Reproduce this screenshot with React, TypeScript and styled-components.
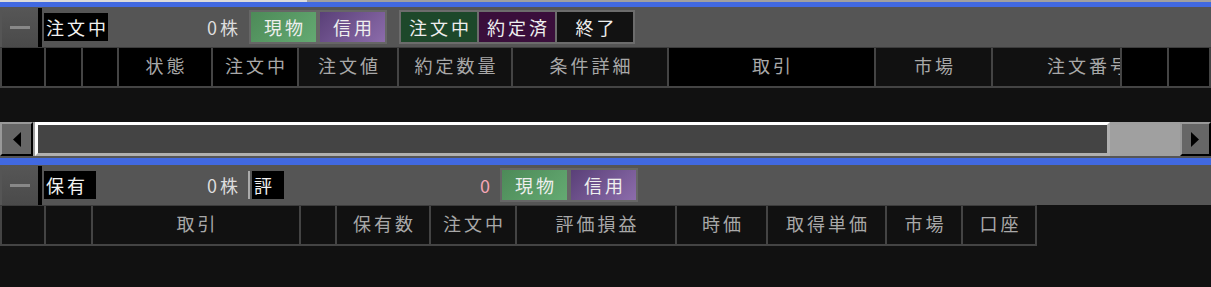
import React from 'react';
import styled, { createGlobalStyle } from 'styled-components';

const GlobalStyle = createGlobalStyle`
	html, body {
		margin: 0;
		padding: 0;
		background: #111;
	}
	body {
		font-family: 'Noto Sans CJK JP', 'DejaVu Sans', sans-serif;
		overflow: hidden;
	}
`;

const Page = styled.div`
	width: 1211px;
	height: 287px;
	display: flex;
	flex-direction: column;
	background: #111;
`;

const TopStrip = styled.div`
	height: 2px;
	background: linear-gradient(to right, #dcdcdc 0, #dcdcdc 307px, #a0a0a0 307px);
`;

const BlueBar = styled.div<{ $h: number }>`
	height: ${({ $h }) => $h}px;
	background: #4169e1;
`;

const Toolbar = styled.div`
	height: 40px;
	display: flex;
	align-items: center;
	background: #555;
`;

const Collapse = styled.div`
	width: 36px;
	height: 39px;
	margin-left: 2px;
	align-self: flex-end;
	background: linear-gradient(#565656, #4a4a4a);
	border-right: 4px solid #000;
	display: flex;
	align-items: center;
	justify-content: center;
	&::after {
		content: '';
		width: 20px;
		height: 3px;
		background: #888;
	}
`;

const Label = styled.div<{ $w: number }>`
	width: ${({ $w }) => $w}px;
	height: 28px;
	margin-left: 2px;
	background: #000;
	color: #f2f2f2;
	font-size: 18px;
	letter-spacing: 3px;
	line-height: 28px;
	padding-left: 2px;
	box-sizing: border-box;
	white-space: nowrap;
`;

const Count = styled.div<{ $ml: number }>`
	margin-left: ${({ $ml }) => $ml}px;
	color: #ddd;
	font-size: 18px;
	letter-spacing: 3px;
	white-space: nowrap;
`;

const Sep = styled.div`
	width: 2px;
	height: 28px;
	margin-left: 7px;
	background: #aaa;
`;

const PinkZero = styled.div`
	margin-left: 196px;
	width: 20px;
	color: #f4a6b6;
	font-size: 18px;
`;

const Group = styled.div<{ $ml: number; $gap: number; $border: string }>`
	margin-left: ${({ $ml }) => $ml}px;
	display: flex;
	gap: ${({ $gap }) => $gap}px;
	padding: 2px;
	background: ${({ $border }) => $border};
`;

const ToggleButton = styled.div<{ $w: number; $bg: string }>`
	width: ${({ $w }) => $w}px;
	height: 30px;
	background: ${({ $bg }) => $bg};
	color: #eee;
	font-size: 18px;
	letter-spacing: 3px;
	padding-left: 3px;
	box-sizing: border-box;
	display: flex;
	align-items: center;
	justify-content: center;
	white-space: nowrap;
`;

const HeaderRow = styled.div<{ $cols: string }>`
	display: grid;
	grid-template-columns: ${({ $cols }) => $cols};
	width: fit-content;
	border-top: 1px solid #3c3c3c;
`;

const HeadCell = styled.div<{ $dark?: boolean; $left?: number }>`
	height: 40px;
	box-sizing: border-box;
	border-left: 2px solid #444;
	border-bottom: 2px solid #444;
	background: ${({ $dark }) => ($dark ? '#000' : '#111')};
	color: #a8a8a8;
	font-size: 18px;
	letter-spacing: 3px;
	display: flex;
	align-items: center;
	justify-content: ${({ $left }) => ($left !== undefined ? 'flex-start' : 'center')};
	padding-left: ${({ $left }) => ($left !== undefined ? $left : 3)}px;
	padding-bottom: 4px;
	white-space: nowrap;
	overflow: hidden;
	&:last-child {
		border-right: 2px solid #444;
	}
`;

const Body = styled.div<{ $h?: number }>`
	height: ${({ $h }) => ($h ? `${$h}px` : 'auto')};
	flex: ${({ $h }) => ($h ? '0 0 auto' : '1')};
	background: #111;
`;

const ScrollBar = styled.div`
	height: 34px;
	display: flex;
	border-bottom: 2px solid #555;
`;

const ArrowButton = styled.div<{ $w: number }>`
	width: ${({ $w }) => $w}px;
	box-sizing: border-box;
	background: #666;
	border-top: 2px solid #999;
	border-left: 2px solid #999;
	border-right: 2px solid #000;
	border-bottom: 2px solid #000;
	display: flex;
	align-items: center;
	justify-content: center;
`;

const Track = styled.div`
	flex: 1;
	display: flex;
	padding-left: 2px;
	background: #a0a0a0;
`;

const Thumb = styled.div`
	width: 1075px;
	box-sizing: border-box;
	background: #444;
	border-top: 3px solid #fff;
	border-left: 3px solid #fff;
	border-bottom: 3px solid #b0b0b0;
	border-right: 3px solid #b0b0b0;
`;

const Arrow = ({ dir }: { dir: 'left' | 'right' }) => (
	<svg width="9" height="15" viewBox="0 0 9 15">
		{dir === 'left' ? (
			<polygon points="9,0 9,15 1,7.5" fill="#000" />
		) : (
			<polygon points="0,0 0,15 8,7.5" fill="#000" />
		)}
	</svg>
);

const GREEN = 'linear-gradient(135deg, #4d8a58, #64aa72)';
const PURPLE = 'linear-gradient(135deg, #5a4078, #8c6cab)';

const orderCols = [44, 37, 36, 94, 86, 100, 114, 156, 207, 117, 129, 47, 44]
	.map((w) => `${w}px`)
	.join(' ');

const holdCols = [44, 47, 208, 36, 94, 86, 160, 91, 119, 76, 76]
	.map((w) => `${w}px`)
	.join(' ');

type Col = { label: string; dark?: boolean; left?: number };

const orderHeaders: Col[] = [
	{ label: '', dark: true },
	{ label: '', dark: true },
	{ label: '', dark: true },
	{ label: '状態', dark: true },
	{ label: '注文中', dark: true },
	{ label: '注文値' },
	{ label: '約定数量' },
	{ label: '条件詳細' },
	{ label: '取引', dark: true },
	{ label: '市場' },
	{ label: '注文番号', left: 54 },
	{ label: '', dark: true },
	{ label: '', dark: true },
];

const holdHeaders: Col[] = [
	{ label: '' },
	{ label: '' },
	{ label: '取引' },
	{ label: '' },
	{ label: '保有数' },
	{ label: '注文中' },
	{ label: '評価損益' },
	{ label: '時価' },
	{ label: '取得単価' },
	{ label: '市場' },
	{ label: '口座' },
];

const App: React.FC = () => {
	return (
		<>
			<GlobalStyle />
			<Page>
				<TopStrip />
				<BlueBar $h={5} />

				<Toolbar>
					<Collapse />
					<Label $w={64}>注文中</Label>
					<Count $ml={99}>0株</Count>
					<Group $ml={8} $gap={4} $border="#666">
						<ToggleButton $w={65} $bg={GREEN}>現物</ToggleButton>
						<ToggleButton $w={65} $bg={PURPLE}>信用</ToggleButton>
					</Group>
					<Group $ml={12} $gap={2} $border="#6c6c6c">
						<ToggleButton $w={76} $bg="#1d482a">注文中</ToggleButton>
						<ToggleButton $w={76} $bg="#3a0e3b">約定済</ToggleButton>
						<ToggleButton $w={76} $bg="#121212">終了</ToggleButton>
					</Group>
				</Toolbar>

				<HeaderRow $cols={orderCols}>
					{orderHeaders.map((c, i) => (
						<HeadCell key={i} $dark={c.dark} $left={c.left}>
							{c.label}
						</HeadCell>
					))}
				</HeaderRow>
				<Body $h={34} />

				<ScrollBar>
					<ArrowButton $w={33}>
						<Arrow dir="left" />
					</ArrowButton>
					<Track>
						<Thumb />
					</Track>
					<ArrowButton $w={31}>
						<Arrow dir="right" />
					</ArrowButton>
				</ScrollBar>
				<BlueBar $h={7} />

				<Toolbar>
					<Collapse />
					<Label $w={52}>保有</Label>
					<Count $ml={111}>0株</Count>
					<Sep />
					<Label $w={32}>評</Label>
					<PinkZero>0</PinkZero>
					<Group $ml={0} $gap={4} $border="#666">
						<ToggleButton $w={65} $bg={GREEN}>現物</ToggleButton>
						<ToggleButton $w={65} $bg={PURPLE}>信用</ToggleButton>
					</Group>
				</Toolbar>

				<HeaderRow $cols={holdCols}>
					{holdHeaders.map((c, i) => (
						<HeadCell key={i}>{c.label}</HeadCell>
					))}
				</HeaderRow>
				<Body />
			</Page>
		</>
	);
};

export default App;
